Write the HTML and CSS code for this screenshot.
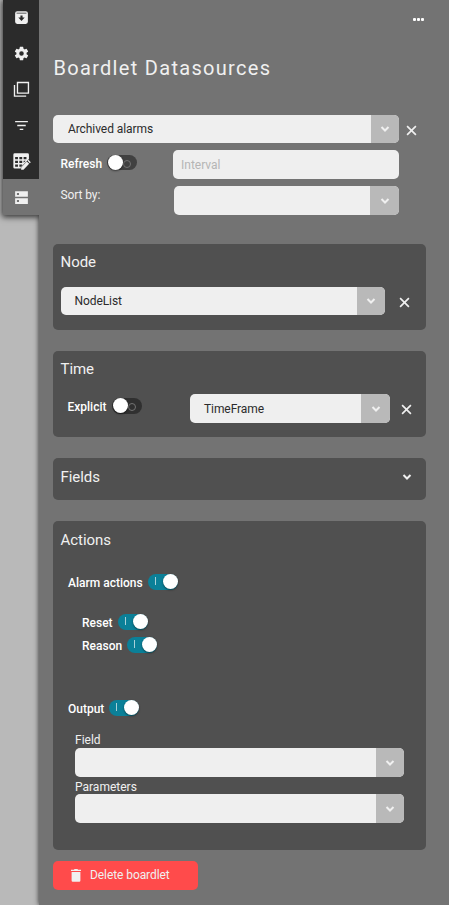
FILE: index.html
```html
<!DOCTYPE html>
<html lang="en">
<head>
<meta charset="utf-8">
<title>Boardlet Datasources</title>
<link rel="stylesheet" href="styles.css">
</head>
<body>
<svg class="defs" aria-hidden="true">
  <symbol id="chevron" viewBox="0 0 10 6"><path d="M1.500 1 5 4.500 8.500 1" fill="none" stroke="currentColor" stroke-width="2"/></symbol>
  <symbol id="close" viewBox="0 0 12 12"><path d="M1.200 1.200l9.600 9.600M10.800 1.200l-9.600 9.600" fill="none" stroke="currentColor" stroke-width="1.800"/></symbol>
</svg>
<div class="app">
  <div class="rail">
    <nav class="tabs">
      <a class="tab"><svg viewBox="0 0 24 24"><path fill-rule="evenodd" d="M6 3h12q3 0 3 3v12q0 3-3 3H6q-3 0-3-3V6q0-3 3-3zM5 5.300v1.200h14V5.300zM10.500 9v3H7.500l4.500 5 4.500-5h-3V9z"/></svg></a>
      <a class="tab"><svg viewBox="0 0 24 24"><path d="M19.140 12.940c.04-.3.06-.61.06-.94s-.02-.64-.07-.94l2.030-1.580a.49.49 0 0 0 .12-.61l-1.920-3.320a.49.49 0 0 0-.59-.22l-2.390.96c-.5-.38-1.030-.7-1.620-.94l-.36-2.540a.48.48 0 0 0-.48-.41h-3.840a.48.48 0 0 0-.47.41l-.36 2.540c-.59.24-1.130.57-1.620.94l-2.390-.96a.48.48 0 0 0-.59.22L2.740 8.870a.48.48 0 0 0 .12.61l2.030 1.580c-.05.3-.09.63-.09.94s.02.64.07.94l-2.030 1.580a.49.49 0 0 0-.12.61l1.920 3.320c.12.22.37.29.59.22l2.390-.96c.5.38 1.030.7 1.620.94l.36 2.540c.05.24.24.41.48.41h3.840c.24 0 .44-.17.47-.41l.36-2.540c.59-.24 1.130-.56 1.620-.94l2.390.96c.22.08.47 0 .59-.22l1.920-3.320a.48.48 0 0 0-.12-.61zM12 15.200A3.200 3.200 0 1 1 12 8.800a3.200 3.200 0 0 1 0 6.400z"/></svg></a>
      <a class="tab"><svg viewBox="0 0 24 24"><path fill="none" stroke="currentColor" stroke-width="1.900" d="M6.300 2.100h15.500v15H6.300zM2.100 5.500v15.800h16.500"/></svg></a>
      <a class="tab"><svg viewBox="0 0 24 24"><path d="M3 5.500h18v2H3zM6 11h12v2H6zM9.500 16.500h5v2h-5z"/></svg></a>
      <a class="tab"><svg viewBox="0 0 24 24"><path fill-rule="evenodd" d="M2.500.5h18q2 0 2 2v6L11 20v2H2.500q-2 0-2-2V2.500q0-2 2-2zM3 5.500v3.300h4V5.500zM9 5.500v3.300h4V5.500zM15 5.500v3.300h4V5.500zM3 10.800v3.300h4v-3.300zM9 10.800v3.300h4v-3.300zM15 10.800v3l3-3zM3 16.100v3.300h4v-3.300zM9 16.100v3.300h2l2-2v-1.300z"/><path d="M11.500 20.500l8-8.500 3.300 3.300-8 8.400h-3.300zM20.500 11l1.300-1.300 3.300 3.300-1.300 1.300z"/></svg></a>
      <a class="tab active"><svg viewBox="0 0 24 24"><path fill-rule="evenodd" d="M3 3h18v8H3zM3 13h18v8H3zM5.500 5.500v3h3v-3zM5.500 15.500v3h3v-3z"/></svg></a>
    </nav>
  </div>
  <main class="panel">
    <div class="menu"><i></i><i></i><i></i></div>
    <h1>Boardlet Datasources</h1>

    <div class="row source">
      <div class="select"><span>Archived alarms</span><b><svg><use href="#chevron"/></svg></b></div>
      <svg class="close"><use href="#close"/></svg>
    </div>
    <div class="row refresh">
      <label>Refresh</label><span class="toggle"></span>
      <div class="input">Interval</div>
    </div>
    <div class="row sort">
      <label>Sort by:</label>
      <div class="select"><span></span><b><svg><use href="#chevron"/></svg></b></div>
    </div>

    <section class="card node">
      <h2>Node</h2>
      <div class="row">
        <div class="select"><span>NodeList</span><b><svg><use href="#chevron"/></svg></b></div>
        <svg class="close"><use href="#close"/></svg>
      </div>
    </section>

    <section class="card time">
      <h2>Time</h2>
      <div class="row">
        <label>Explicit</label><span class="toggle"></span>
        <div class="select"><span>TimeFrame</span><b><svg><use href="#chevron"/></svg></b></div>
        <svg class="close"><use href="#close"/></svg>
      </div>
    </section>

    <section class="card fields">
      <h2>Fields</h2>
      <svg class="expand"><use href="#chevron"/></svg>
    </section>

    <section class="card actions">
      <h2>Actions</h2>
      <div class="row option alarm"><label>Alarm actions</label><span class="toggle on"></span></div>
      <div class="row option reset"><label>Reset</label><span class="toggle on"></span></div>
      <div class="row option reason"><label>Reason</label><span class="toggle on"></span></div>
      <div class="row option output"><label>Output</label><span class="toggle on"></span></div>
      <div class="output-fields">
        <label>Field</label>
        <div class="select"><span></span><b><svg><use href="#chevron"/></svg></b></div>
        <label>Parameters</label>
        <div class="select"><span></span><b><svg><use href="#chevron"/></svg></b></div>
      </div>
    </section>

    <button class="delete"><svg viewBox="0 0 10 13"><path d="M0 .8h3L3.500 0h3l.5.800h3V2H0zM.6 3h8.800v8.600q0 1.200-1.200 1.200H1.800Q.6 12.800.6 11.600z"/></svg>Delete boardlet</button>
  </main>
</div>
</body>
</html>
```
FILE: styles.css
```css
* { box-sizing: border-box; }
body {
  margin: 0;
  height: 905px;
  overflow: hidden;
  background: #b9b9b9;
  color: #f0f0f0;
  font: 12px/16px Roboto, sans-serif;
}
.defs { position: absolute; width: 0; height: 0; }
.app { display: flex; height: 905px; }
.rail { width: 39px; padding-left: 3px; z-index: 1; }
.tabs { height: 215px; background: #2b2b2b; box-shadow: 0 1px 6px 1px rgba(0,0,0,.75); clip-path: inset(0 0 -12px -12px); }
.tab { display: flex; height: 36px; align-items: center; justify-content: center; color: #f0f0f0; }
.tab:first-child { height: 35px; }
.tab svg { width: 17px; height: 17px; fill: currentColor; overflow: visible; }
.tab.active { background: #737373; }
.panel { flex: 1; display: flex; flex-direction: column; padding: 18px 23px 0 14px; background: #737373; box-shadow: 0 0 5px rgba(0,0,0,.8); }
.menu { display: flex; gap: 1px; height: 3px; margin-left: 360px; }
.menu i { width: 3px; height: 3px; border-radius: 1px; background: #fff; }
h1 { height: 28px; margin: 33px 0 33px; padding-left: .5px; font-size: 20px; line-height: 28px; font-weight: 400; letter-spacing: 1.300px; white-space: nowrap; }
.row { display: flex; }
.select { display: flex; height: 29px; overflow: hidden; border-radius: 5px; background: #efefef; color: #2b2b2b; flex: none; }
.select span { flex: 1; padding-left: 14px; line-height: 28px; letter-spacing: -.08px; }
.select b { display: flex; align-items: center; justify-content: center; width: 28px; background: #b9b9b9; color: #f0f0f0; }
.select b svg, .expand { width: 10px; height: 6px; }
.close { width: 11px; height: 11px; color: #f0f0f0; flex: none; }
.source .select { width: 346px; height: 28px; }
.source .select span { padding-left: 15px; }
.source .close { margin: 10px 0 0 7px; }
.refresh { height: 29px; margin-top: 7px; padding-left: 7.500px; }
.refresh label { width: 46.500px; padding-top: 6px; }
.refresh .toggle { margin-top: 5px; }
.input { width: 226px; margin-left: 36px; padding-left: 8px; line-height: 30px; border-radius: 5px; background: #efefef; color: #b5b5b5; }
.sort { height: 29px; margin-top: 7px; padding-left: 7.500px; }
.sort label { width: 113.500px; padding-top: 1px; letter-spacing: -.1px; }
.sort .select { width: 225px; }
.sort b, .time b { width: 29px; }
.refresh label, .time label, .option label { color: #fff; font-weight: 500; }
.toggle { position: relative; flex: none; width: 30px; height: 16px; border-radius: 8px; background: #303030; }
.refresh .toggle { height: 15px; background: #414141; }
.toggle::before { content: ""; position: absolute; top: 5px; right: 6px; width: 6px; height: 6px; border: 1px solid #737373; border-radius: 50%; }
.toggle::after { content: ""; position: absolute; top: 0; left: 1px; width: 15px; height: 15px; border-radius: 50%; background: #fff; box-shadow: 0 1px 2px rgba(0,0,0,.5); }
.toggle.on { background: #0b8098; }
.toggle.on::before { top: 3px; left: 7px; width: 1px; height: 8px; border: 0; border-radius: 0; background: #a9d0d9; }
.toggle.on::after { left: 15px; }
.card { width: 373px; flex: none; border-radius: 5px; background: #505050; margin-bottom: 21px; padding: 8px 7.500px 0; }
h2 { margin: 0; font-size: 15px; line-height: 20px; font-weight: 400; letter-spacing: -.05px; }
.node { height: 86px; margin-top: 29px; }
.node .row { margin-top: 15px; }
.node .select { width: 324px; height: 28px; }
.node .close { margin: 10px 0 0 14px; }
.time { height: 86px; }
.time .row { margin: 15px 0 0 7px; }
.time label { width: 44.500px; padding-top: 5px; }
.time .toggle { margin-top: 4px; }
.time .select { width: 200px; margin-left: 48px; }
.time .select span { line-height: 30px; }
.time .close { margin: 10px 0 0 11px; }
.fields { display: flex; height: 42px; align-items: flex-start; justify-content: space-between; padding-top: 9px; }
.expand { margin: 7px 6.500px 0 0; }
.actions { height: 329px; margin-bottom: 11px; padding-top: 9px; }
.option { height: 16px; }
.option label { margin-right: 5px; line-height: 18px; }
.alarm { margin: 24px 0 0 7.500px; }
.reset { margin: 24px 0 0 21.500px; }
.reason { margin: 7px 0 0 21.500px; }
.output { margin: 47px 0 0 7.500px; }
.output-fields { width: 329px; margin: 16px 0 0 14.500px; }
.output-fields label { display: block; height: 16px; }
.output-fields .select + label { height: 17px; padding-top: 2px; }
.delete { display: flex; width: 145px; height: 29px; flex: none; align-items: center; padding: 0 0 1px 18px; border: 0; border-radius: 5px; background: #ff4b4b; color: #f0f0f0; font: 12px/16px Roboto, sans-serif; letter-spacing: -.08px; }
.delete svg { width: 10px; height: 13px; margin: 1px 9px 0 0; fill: currentColor; }
```
